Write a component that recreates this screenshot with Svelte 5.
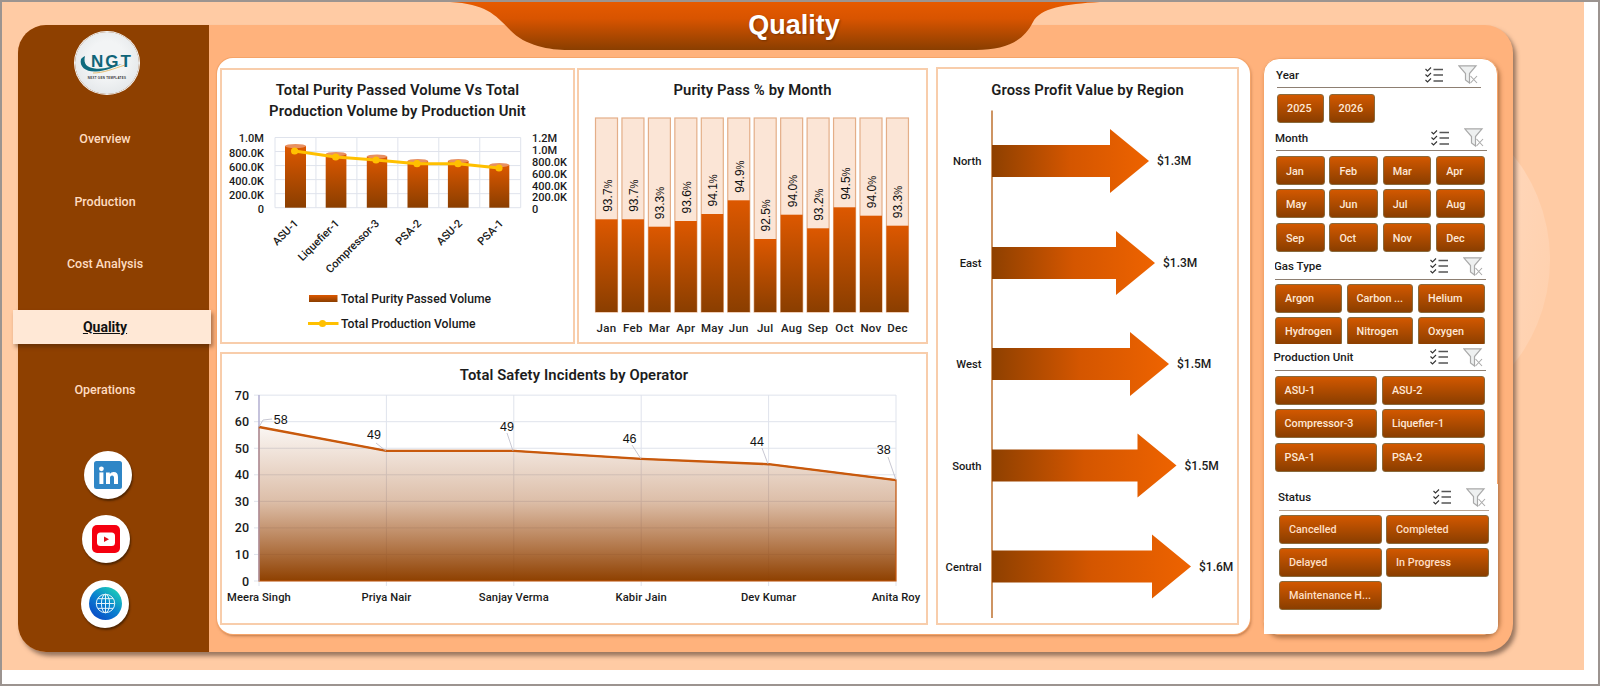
<script lang="ts">
	const navItems = ['Overview', 'Production', 'Cost Analysis', 'Quality', 'Operations'];
	const activeNav = 'Quality';

	const slicers = [
		{ key: 'year', title: 'Year', cols: 2, items: ['2025', '2026'] },
		{
			key: 'month',
			title: 'Month',
			cols: 4,
			items: ['Jan', 'Feb', 'Mar', 'Apr', 'May', 'Jun', 'Jul', 'Aug', 'Sep', 'Oct', 'Nov', 'Dec']
		},
		{
			key: 'gas',
			title: 'Gas Type',
			cols: 3,
			items: ['Argon', 'Carbon ...', 'Helium', 'Hydrogen', 'Nitrogen', 'Oxygen']
		},
		{
			key: 'unit',
			title: 'Production Unit',
			cols: 2,
			items: ['ASU-1', 'ASU-2', 'Compressor-3', 'Liquefier-1', 'PSA-1', 'PSA-2']
		},
		{
			key: 'status',
			title: 'Status',
			cols: 2,
			items: ['Cancelled', 'Completed', 'Delayed', 'In Progress', 'Maintenance H...']
		}
	];

	// chart coordinates below are page pixels, each svg viewBox starts where the svg sits
	const unitBase = 207.7;
	const unitBars = [
		{ label: 'ASU-1', x: 285, w: 21, top: 146, lineX: 294.6, lineY: 151, tick: 299 },
		{ label: 'Liquefier-1', x: 325.7, w: 20.7, top: 154, lineX: 335.7, lineY: 157, tick: 340 },
		{ label: 'Compressor-3', x: 366.8, w: 20.4, top: 156.5, lineX: 376, lineY: 160, tick: 380 },
		{ label: 'PSA-2', x: 407.5, w: 20.6, top: 161, lineX: 417, lineY: 163.7, tick: 422 },
		{ label: 'ASU-2', x: 447.9, w: 20.7, top: 161, lineX: 458, lineY: 163.7, tick: 463 },
		{ label: 'PSA-1', x: 489.3, w: 20, top: 165, lineX: 499, lineY: 168, tick: 504 }
	];
	const unitLeft = [
		['1.0M', 142],
		['800.0K', 157],
		['600.0K', 170.5],
		['400.0K', 185],
		['200.0K', 198.5],
		['0', 213]
	];
	const unitRight = [
		['1.2M', 142],
		['1.0M', 154],
		['800.0K', 166],
		['600.0K', 177.5],
		['400.0K', 189.5],
		['200.0K', 201],
		['0', 213]
	];

	const monthBars = [
		{ m: 'Jan', v: '93.7', y: 219.3 },
		{ m: 'Feb', v: '93.7', y: 219.3 },
		{ m: 'Mar', v: '93.3', y: 226.7 },
		{ m: 'Apr', v: '93.6', y: 221 },
		{ m: 'May', v: '94.1', y: 214 },
		{ m: 'Jun', v: '94.9', y: 200.3 },
		{ m: 'Jul', v: '92.5', y: 239 },
		{ m: 'Aug', v: '94.0', y: 214.7 },
		{ m: 'Sep', v: '93.2', y: 228.3 },
		{ m: 'Oct', v: '94.5', y: 207.3 },
		{ m: 'Nov', v: '94.0', y: 215.7 },
		{ m: 'Dec', v: '93.3', y: 225.7 }
	];

	const regions = [
		{ name: 'North', value: '$1.3M', cy: 161, tip: 1149 },
		{ name: 'East', value: '$1.3M', cy: 263, tip: 1155 },
		{ name: 'West', value: '$1.5M', cy: 364, tip: 1169 },
		{ name: 'South', value: '$1.5M', cy: 465.5, tip: 1176.5 },
		{ name: 'Central', value: '$1.6M', cy: 566.5, tip: 1191 }
	];

	function arrowPoints(cy: number, tip: number) {
		const neck = tip - 39;
		return `992,${cy - 16} ${neck},${cy - 16} ${neck},${cy - 32} ${tip},${cy} ${neck},${cy + 32} ${neck},${cy + 16} 992,${cy + 16}`;
	}

	const plotLeft = 259;
	const plotBottom = 581;
	const stepX = 127.4;
	const stepY = 26.55;
	const operators = [
		{ name: 'Meera Singh', v: 58, lx: 280.7, ly: 419, leader: '259,427 263,420 272,419' },
		{ name: 'Priya Nair', v: 49, lx: 374, ly: 434, leader: '386,451 376,443' },
		{ name: 'Sanjay Verma', v: 49, lx: 507, ly: 426, leader: '513,451 507,433' },
		{ name: 'Kabir Jain', v: 46, lx: 629.6, ly: 438, leader: '641,459 632,445' },
		{ name: 'Dev Kumar', v: 44, lx: 757, ly: 441, leader: '768,464 762,448' },
		{ name: 'Anita Roy', v: 38, lx: 883.7, ly: 449, leader: '896,480 888,457' }
	];
	const opPoints = operators.map((o, i) => ({
		x: plotLeft + i * stepX,
		y: plotBottom - (o.v / 10) * stepY
	}));
	const opLine = opPoints.map((p) => `${p.x},${p.y}`).join(' ');
	const opArea = `${plotLeft},${plotBottom} ${opLine} ${opPoints[5].x},${plotBottom}`;
</script>

{#snippet slicerIcons()}
	<svg class="checklist" viewBox="0 0 18 16" aria-hidden="true">
		<path d="M0.5 2 L2.5 4 L6 0.5 M0.5 7.5 L2.5 9.5 L6 6 M0.5 13 L2.5 15 L6 11.5" />
		<path class="bars" d="M8.5 2.5 H18 M8.5 8 H18 M8.5 14 H18" />
	</svg>
	<svg class="clear" viewBox="0 0 20 19" aria-hidden="true">
		<path class="funnel" d="M0.8 0.8 H18 L11.5 8.5 V18 L7.5 15 V8.5 Z" />
		<path class="cross" d="M12.5 11 L19 18 M19 11 L12.5 18" />
	</svg>
{/snippet}

<div class="page">
	<div class="canvas">
		<div class="backdrop"></div>

		<header class="title-tab">
			<svg viewBox="0 0 670 48" aria-hidden="true">
				<defs>
					<linearGradient id="tabFill" x1="0" y1="0" x2="0" y2="1">
						<stop offset="0" stop-color="#e65a00" />
						<stop offset="0.35" stop-color="#d85400" />
						<stop offset="1" stop-color="#8a3e00" />
					</linearGradient>
				</defs>
				<path
					fill="url(#tabFill)"
					d="M10 0 C45 2 55 12 70 28 C85 44 110 48 128 48 L536 48 C565 48 583 40 593 20 C600 6 625 2 660 0 Z"
				/>
			</svg>
			<h1>Quality</h1>
		</header>

		<div class="main">
			<aside class="sidebar">
				<div class="logo">
					<svg viewBox="0 0 64 62" aria-label="NGT logo">
						<path class="swoosh" d="M6 27 C4 35 11 40 21 39.5 C31 39 39 35 47 32 C38 34 29 37.5 20 36.5 C12 35.5 8 32 10 24 C8 25 7 26 6 27 Z" />
						<path class="swoosh-gold" d="M18 41 C28 41 38 37 50 33" />
						<text class="logo-name" x="37" y="35" text-anchor="middle">NGT</text>
						<text class="logo-sub" x="32" y="46.5" text-anchor="middle">NEXT GEN TEMPLATES</text>
					</svg>
				</div>

				<nav>
					{#each navItems as item}
						<a href="#{item}" class="nav-item" class:active={item === activeNav}>{item}</a>
					{/each}
				</nav>

				<div class="social">
					<a href="#linkedin" class="round linkedin" aria-label="LinkedIn">
						<svg viewBox="0 0 28 28">
							<rect width="28" height="28" rx="2.5" fill="#2f86c6" />
							<circle cx="7.4" cy="7.8" r="2.4" fill="#fff" />
							<rect x="5.4" y="11.4" width="4" height="11.6" fill="#fff" />
							<path fill="#fff" d="M12 11.4 H15.8 V13 C16.6 11.9 18 11.1 19.6 11.1 C22.6 11.1 24 13 24 16 V23 H20 V16.8 C20 15.3 19.4 14.4 18.1 14.4 C16.8 14.4 16 15.3 16 16.8 V23 H12 Z" />
						</svg>
					</a>
					<a href="#youtube" class="round youtube" aria-label="YouTube">
						<svg viewBox="0 0 28 28">
							<rect width="28" height="28" rx="5" fill="#f5000f" />
							<rect x="5" y="7.5" width="18" height="13.5" rx="3.5" fill="#fff" />
							<path d="M12 11.4 L17 14.2 L12 17 Z" fill="#e0101a" />
						</svg>
					</a>
					<a href="#web" class="round web" aria-label="Website">
						<svg viewBox="0 0 34 34">
							<defs>
								<linearGradient id="globeFill" x1="0.85" y1="0.05" x2="0.2" y2="0.9">
									<stop offset="0" stop-color="#1cd0b8" />
									<stop offset="0.55" stop-color="#0a80d0" />
									<stop offset="1" stop-color="#0a50c8" />
								</linearGradient>
							</defs>
							<circle cx="17" cy="17" r="17" fill="url(#globeFill)" />
							<g class="globe">
								<circle cx="17" cy="17" r="9.5" />
								<ellipse cx="17" cy="17" rx="4.2" ry="9.5" />
								<path d="M17 7.5 V26.5 M7.5 17 H26.5 M9 12 H25 M9 22 H25" />
							</g>
						</svg>
					</a>
				</div>
			</aside>

			<section class="content">
				<div class="board">
					<div class="left-col">
						<div class="top-row">
							<article class="panel unit-panel">
								<h2 class="two-line">Total Purity Passed Volume Vs Total<br />Production Volume by Production Unit</h2>
								<svg viewBox="222 122 351 220" class="chart">
									<defs>
										<linearGradient id="barFill" x1="0" y1="0" x2="0" y2="1">
											<stop offset="0" stop-color="#dd5800" />
											<stop offset="1" stop-color="#8a3e00" />
										</linearGradient>
									</defs>
									{#each [0, 1, 2, 3, 4, 5] as i}
										<line class="grid" x1="275" x2="520.7" y1={137.5 + i * 14.04} y2={137.5 + i * 14.04} />
										<line class="grid" y1="137.5" y2="207.7" x1={275 + i * 40.95} x2={275 + i * 40.95} />
									{/each}
									<line class="grid" y1="137.5" y2="207.7" x1="520.7" x2="520.7" />
									{#each unitBars as bar}
										<rect x={bar.x} y={bar.top} width={bar.w} height={unitBase - bar.top} fill="url(#barFill)" />
										<ellipse cx={bar.x + bar.w / 2} cy={bar.top} rx={bar.w / 2} ry="2" fill="#e89060" />
									{/each}
									<polyline class="unit-line" points={unitBars.map((b) => `${b.lineX},${b.lineY}`).join(' ')} />
									{#each unitBars as bar}
										<circle cx={bar.lineX} cy={bar.lineY} r="3.6" fill="#ffc000" />
										<text class="tick" transform="translate({bar.tick} 224) rotate(-45)" text-anchor="end">{bar.label}</text>
									{/each}
									{#each unitLeft as [label, y]}
										<text class="tick" x="264" {y} text-anchor="end">{label}</text>
									{/each}
									{#each unitRight as [label, y]}
										<text class="tick" x="532" {y}>{label}</text>
									{/each}
									<rect x="309" y="295" width="28.5" height="7" fill="url(#barFill)" />
									<text class="legend" x="341" y="303">Total Purity Passed Volume</text>
									<line class="unit-line" x1="308" x2="338.5" y1="323.5" y2="323.5" />
									<circle cx="322.5" cy="323.5" r="3.6" fill="#ffc000" />
									<text class="legend" x="341" y="328">Total Production Volume</text>
								</svg>
							</article>

							<article class="panel month-panel">
								<h2>Purity Pass % by Month</h2>
								<svg viewBox="579 106 347 236" class="chart">
									{#each monthBars as bar, i}
										{@const x = 595.5 + i * 26.45}
										<rect class="track" {x} y="118" width="22" height="194" />
										<rect {x} y={bar.y} width="22" height={312 - bar.y} fill="url(#barFill)" />
										<text class="pct" transform="translate({x + 16} {bar.y - 7.5}) rotate(-90)">{bar.v}<tspan class="pct-sign">%</tspan></text>
										<text class="month-label" x={x + 11} y="332" text-anchor="middle">{bar.m}</text>
									{/each}
								</svg>
							</article>
						</div>

						<article class="panel operator-panel">
							<h2>Total Safety Incidents by Operator</h2>
							<svg viewBox="222 390 704 233" class="chart">
								<defs>
									<linearGradient id="areaFill" gradientUnits="userSpaceOnUse" x1="0" y1="427" x2="0" y2="581">
										<stop offset="0" stop-color="#a04c10" stop-opacity="0.05" />
										<stop offset="0.48" stop-color="#a04c10" stop-opacity="0.36" />
										<stop offset="1" stop-color="#8e4000" stop-opacity="1" />
									</linearGradient>
								</defs>
								{#each [0, 1, 2, 3, 4, 5, 6, 7] as i}
									<line class="grid" x1="254" x2="896" y1={plotBottom - i * stepY} y2={plotBottom - i * stepY} />
									<text class="op-tick" x="249" y={plotBottom + 4.5 - i * stepY} text-anchor="end">{i * 10}</text>
								{/each}
								{#each opPoints as p}
									<line class="grid" x1={p.x} x2={p.x} y1="395" y2="586" />
								{/each}
								<polygon class="op-area" points={opArea} fill="url(#areaFill)" />
								<line class="axis" x1="259" x2="259" y1="395" y2="581" />
								<polyline class="op-line" points={opLine} />
								{#each operators as op, i}
									<polyline class="leader" points={op.leader} />
									<text class="op-value" x={op.lx} y={op.ly + 4.5} text-anchor="middle">{op.v}</text>
									<text class="op-name" x={opPoints[i].x} y="600.5" text-anchor="middle">{op.name}</text>
								{/each}
							</svg>
						</article>
					</div>

					<article class="panel region-panel">
						<h2>Gross Profit Value by Region</h2>
						<svg viewBox="938 107 299 516" class="chart">
							<defs>
								<linearGradient id="arrowFill" x1="0" y1="0" x2="1" y2="0">
									<stop offset="0" stop-color="#8e4000" />
									<stop offset="0.5" stop-color="#d45600" />
									<stop offset="1" stop-color="#ee6300" />
								</linearGradient>
							</defs>
							<line class="region-axis" x1="992" x2="992" y1="110.5" y2="618" />
							{#each regions as r}
								<polygon points={arrowPoints(r.cy, r.tip)} fill="url(#arrowFill)" />
								<text class="region-name" x="981.5" y={r.cy + 4} text-anchor="end">{r.name}</text>
								<text class="region-value" x={r.tip + 8} y={r.cy + 4}>{r.value}</text>
							{/each}
						</svg>
					</article>
				</div>

				<div class="filters">
					{#each slicers as slicer}
						<div class="slicer {slicer.key}">
							<div class="slicer-head">
								<span>{slicer.title}</span>
								<div class="slicer-icons">{@render slicerIcons()}</div>
							</div>
							<div class="slicer-buttons" style="grid-template-columns: repeat({slicer.cols}, var(--btn))">
								{#each slicer.items as item}
									<button type="button">{item}</button>
								{/each}
							</div>
						</div>
					{/each}
				</div>
			</section>
		</div>
	</div>
</div>

<style>
	:global(body) {
		margin: 0;
		overflow: hidden;
		background: #fff;
	}

	.page {
		box-sizing: border-box;
		width: 1600px;
		height: 686px;
		border: 2px solid #9c9490;
		background: #fff;
		font-family: Roboto, 'Liberation Sans', sans-serif;
		color: #1a1a1a;
	}

	.canvas {
		position: relative;
		box-sizing: border-box;
		width: 1582px;
		height: 668px;
		padding: 23px 0 0 16px;
		background: #ffcba4;
		overflow: hidden;
	}

	.backdrop {
		position: absolute;
		left: 1212px;
		top: 90px;
		width: 336px;
		height: 336px;
		border-radius: 50%;
		background: linear-gradient(100deg, #ffdcc4 60%, #ffcfab 100%);
	}

	.title-tab {
		position: absolute;
		left: 438px;
		top: 0;
		z-index: 3;
		display: flex;
		justify-content: center;
		width: 670px;
		height: 48px;
		padding-left: 38px;
		box-sizing: border-box;
	}

	.title-tab svg {
		position: absolute;
		inset: 0;
		width: 670px;
		height: 48px;
	}

	.title-tab h1 {
		position: relative;
		margin: 8px 0 0;
		font: bold 27px/30px 'Liberation Sans', sans-serif;
		color: #fff;
		text-shadow: 1px 1px 2px rgba(90, 40, 0, 0.6);
	}

	.main {
		position: relative;
		display: flex;
		width: 1495px;
		height: 627px;
		border-radius: 28px;
		background: #ffb27c;
		box-shadow: 3px 4px 4px rgba(70, 50, 40, 0.55);
	}

	.sidebar {
		box-sizing: border-box;
		flex: none;
		display: flex;
		flex-direction: column;
		width: 191px;
		padding: 7px 17px 0 0;
		background: #8e4000;
		border-radius: 28px 0 0 28px;
	}

	.logo {
		align-self: center;
		width: 64px;
		height: 62px;
		margin-left: 4px;
		border-radius: 50%;
		background: radial-gradient(circle at 50% 45%, #f2f4f5 40%, #dfe3e6 90%);
		box-shadow: 0 0 0 1px #f6f6f6;
	}

	.logo svg {
		display: block;
		width: 64px;
		height: 62px;
	}

	.swoosh {
		fill: #0f6b7e;
	}

	.swoosh-gold {
		fill: none;
		stroke: #e0b050;
		stroke-width: 0.8;
	}

	.logo-name {
		font: 900 17px 'Liberation Sans', sans-serif;
		letter-spacing: 2px;
		fill: #0f6478;
	}

	.logo-sub {
		font: bold 2.9px 'Liberation Sans', sans-serif;
		letter-spacing: 0.3px;
		fill: #333;
	}

	nav {
		display: flex;
		flex-direction: column;
		margin-top: 12px;
	}

	.nav-item {
		box-sizing: border-box;
		height: 62.5px;
		padding-top: 24px;
		text-align: center;
		font-size: 12.5px;
		font-weight: 500;
		line-height: 18px;
		color: #ffdcc0;
		text-decoration: none;
	}

	.nav-item.active {
		height: 34px;
		margin: 16px -19px 13px -5px;
		padding: 8px 14px 0 0;
		background: #ffe8d6;
		color: #111;
		font-weight: 700;
		font-size: 14px;
		text-decoration: underline;
		box-shadow: 2px 3px 4px rgba(60, 30, 10, 0.45);
	}

	.social {
		display: flex;
		flex-direction: column;
		gap: 16.5px;
		margin-top: 31.5px;
	}

	.round {
		box-sizing: border-box;
		display: flex;
		align-items: center;
		justify-content: center;
		width: 48px;
		height: 48px;
		border-radius: 50%;
		background: #fff;
		box-shadow: 1px 2px 2px rgba(40, 20, 0, 0.6);
	}

	.linkedin {
		margin-left: 66px;
	}

	.youtube {
		margin-left: 64px;
	}

	.web {
		margin-left: 63px;
	}

	.linkedin svg,
	.youtube svg {
		width: 28px;
		height: 28px;
	}

	.web svg {
		width: 33px;
		height: 33px;
	}

	.globe {
		fill: none;
		stroke: #e8f6fb;
		stroke-width: 1;
	}

	.content {
		display: flex;
		gap: 13px;
		padding: 33px 0 0 8px;
	}

	.board {
		box-sizing: border-box;
		display: flex;
		gap: 8px;
		width: 1033px;
		height: 576px;
		padding: 9px 11px 9px 3px;
		background: #fff;
		border-radius: 16px;
		box-shadow: 0 0 0 1px #f5a469, 1px 2px 3px rgba(120, 60, 20, 0.5);
	}

	.left-col {
		display: flex;
		flex-direction: column;
		gap: 8px;
		width: 708px;
		margin-top: 1px;
	}

	.top-row {
		display: flex;
		gap: 2px;
	}

	.panel {
		box-sizing: border-box;
		display: flex;
		flex-direction: column;
		border: 2px solid #f8cdab;
		background: #fff;
	}

	.unit-panel {
		width: 355px;
		height: 276px;
	}

	.month-panel {
		width: 351px;
		height: 276px;
	}

	.operator-panel {
		width: 708px;
		height: 273px;
	}

	.region-panel {
		width: 303px;
		height: 558px;
	}

	.panel h2 {
		box-sizing: border-box;
		flex: none;
		height: 36px;
		margin: 0;
		padding-top: 10px;
		text-align: center;
		font-size: 14.8px;
		font-weight: 600;
		line-height: 21px;
		letter-spacing: 0.1px;
		color: #1c1c1c;
	}

	.panel h2.two-line {
		height: 52px;
	}

	.operator-panel h2 {
		padding-top: 11px;
	}

	.region-panel h2 {
		height: 38px;
		padding-top: 11px;
	}

	.chart {
		display: block;
		width: 100%;
		flex: 1;
		min-height: 0;
		overflow: visible;
	}

	.grid {
		stroke: #dfe3ec;
		stroke-width: 1;
	}

	.tick {
		font-size: 11px;
		font-weight: 500;
		fill: #1a1a1a;
	}

	.unit-line {
		fill: none;
		stroke: #ffc000;
		stroke-width: 3;
		stroke-linejoin: round;
	}

	.legend {
		font-size: 12.2px;
		font-weight: 500;
		fill: #1a1a1a;
	}

	.track {
		fill: #fbe5d6;
		stroke: #e4ae88;
		stroke-width: 1.2;
	}

	.pct {
		font: 12px 'Liberation Sans', sans-serif;
		fill: #111;
	}

	.pct-sign {
		font-size: 10px;
	}

	.month-label {
		font-size: 11.5px;
		font-weight: 500;
		letter-spacing: 0.3px;
		fill: #222;
	}

	.axis {
		stroke: #a8a4cc;
		stroke-width: 1.2;
	}

	.op-tick {
		font-size: 12.5px;
		font-weight: 500;
		fill: #1a1a1a;
	}

	.op-area {
		stroke: #c8590c;
		stroke-width: 1.2;
	}

	.op-line {
		fill: none;
		stroke: #c8590c;
		stroke-width: 2.4;
	}

	.leader {
		fill: none;
		stroke: #b9b9c6;
		stroke-width: 0.8;
	}

	.op-value {
		font: 12.5px 'Liberation Sans', sans-serif;
		fill: #111;
	}

	.op-name {
		font-size: 11.2px;
		font-weight: 500;
		letter-spacing: 0.1px;
		fill: #1a1a1a;
	}

	.region-axis {
		stroke: #c27a3c;
		stroke-width: 1.6;
	}

	.region-name,
	.region-value {
		font-size: 11.2px;
		font-weight: 500;
		fill: #1a1a1a;
	}

	.region-value {
		font-size: 12px;
	}

	.filters {
		box-sizing: border-box;
		display: flex;
		flex-direction: column;
		width: 235px;
		height: 577px;
		padding-top: 3px;
		background: #fff;
		border: 1px solid #f5a469;
		border-radius: 16px;
		box-shadow: 2px 3px 4px rgba(110, 60, 20, 0.5);
	}

	.slicer {
		flex: none;
		--btn: 48.7px;
		--btn-gap: 4.7px;
		--rule: #8d7f72;
		margin-left: 12px;
		width: 211px;
	}

	.slicer-head {
		box-sizing: border-box;
		display: flex;
		align-items: center;
		justify-content: space-between;
		height: 26px;
		padding-right: 3px;
		border-bottom: 1.5px solid var(--rule);
		font-size: 11.5px;
		font-weight: 500;
		color: #1a1a1a;
	}

	.slicer-head span {
		margin-left: -1px;
	}

	.slicer-icons {
		display: flex;
		align-items: center;
		gap: 15px;
	}

	.checklist {
		width: 18px;
		height: 16px;
		fill: none;
		stroke: #333;
		stroke-width: 1.1;
	}

	.checklist .bars {
		stroke: #555;
		stroke-width: 1.4;
	}

	.clear {
		width: 20px;
		height: 19px;
		fill: none;
	}

	.funnel {
		fill: #eef0f0;
		stroke: #a9a9a9;
		stroke-width: 1.2;
	}

	.cross {
		stroke: #a9a9a9;
		stroke-width: 1.1;
	}

	.slicer-buttons {
		display: grid;
		gap: 4.3px var(--btn-gap);
		margin-top: 5px;
	}

	button {
		box-sizing: border-box;
		height: 29px;
		padding: 0 0 0 9px;
		border: 1px solid #8a6a3c;
		border-radius: 3px;
		background: linear-gradient(#d25800, #8a3e00);
		font-family: Roboto, 'Liberation Sans', sans-serif;
		font-size: 10.8px;
		font-weight: 500;
		text-align: left;
		color: #ffe8d6;
		white-space: nowrap;
		overflow: hidden;
	}

	.year {
		margin-left: 13px;
		width: 204px;
		--btn: 46.5px;
		--btn-gap: 5px;
	}

	.year .slicer-buttons {
		margin-top: 6px;
	}

	.month {
		margin-top: 2px;
	}

	.month button {
		padding-top: 2px;
	}

	.gas {
		--btn: 66.5px;
		--btn-gap: 5px;
		height: 90px;
		margin: 2.4px 0 0 11px;
		overflow: hidden;
	}

	.gas .slicer-buttons {
		margin-top: 4px;
	}

	.unit {
		--btn: 102.7px;
		--btn-gap: 4.7px;
		margin: 1px 0 0 10.5px;
	}

	.status {
		--btn: 102.7px;
		--btn-gap: 4.3px;
		--rule: #b7a494;
		flex: 1;
		box-sizing: border-box;
		width: auto;
		margin: 12px -1px 0 0;
		padding: 1px 9px 0 15px;
		background: #fff;
		border-radius: 0 0 8px 0;
	}

	.status .slicer-buttons {
		margin-top: 4px;
	}

	.status button {
		color: #ffdfc4;
	}
</style>
